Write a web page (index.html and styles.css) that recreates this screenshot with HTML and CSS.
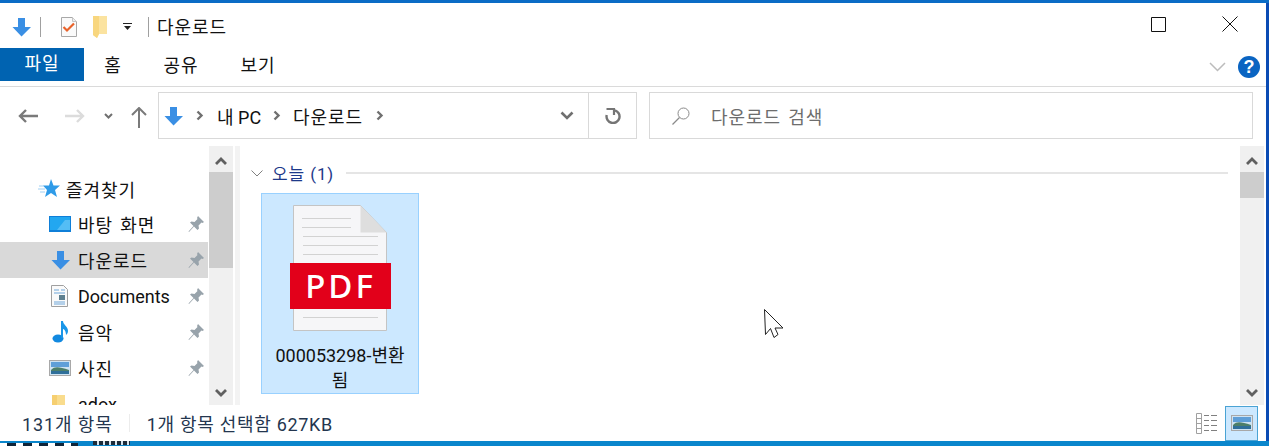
FILE: index.html

```html
<!DOCTYPE html>
<html lang="ko">
<head>
  <meta charset="UTF-8">
  <title>다운로드</title>
  <link rel="stylesheet" href="styles.css">
</head>
<body>
  <div class="window">
    <div class="titlebar">
      <svg class="qa-down" width="20" height="20" viewBox="0 0 20 20"><path d="M6 1h7v9h6l-9.500 9.500L0.500 10h5.500z" fill="#3a8fe4"/></svg>
      <span class="qa-sep"></span>
      <svg class="qa-props" width="18" height="22" viewBox="0 0 18 22"><path d="M1.500 1.500h11l4 4v15h-15z" fill="#fafafa" stroke="#a8a8a8"/><path d="M12.500 1.500v4h4" fill="#eee" stroke="#c4c4c4"/><path d="M3.500 11l3.500 3.500 7-7" fill="none" stroke="#e8622a" stroke-width="2.200"/></svg>
      <svg class="qa-folder" width="15" height="22" viewBox="0 0 15 22"><path d="M0 0h14v18H6l-2 4-4-3z" fill="#fbe3a0"/><path d="M0 0h6v18l-2 4-4-3z" fill="#f8d67e"/></svg>
      <svg class="qa-more" width="9" height="7" viewBox="0 0 9 7"><path d="M0 0h9v1H0zM1 3h7L4.500 7z" fill="#222"/></svg>
      <span class="qa-sep second"></span>
      <span class="title">다운로드</span>
      <div class="win-btns">
        <svg width="15" height="15" viewBox="0 0 15 15"><path d="M.5.500h14v14H.500z" fill="none" stroke="#111"/></svg>
        <svg width="16" height="16" viewBox="0 0 16 16"><path d="M.5.500l15 15M15.500.500l-15 15" fill="none" stroke="#111"/></svg>
      </div>
    </div>

    <div class="ribbon">
      <span class="tab-file">파일</span>
      <span class="tab tab-home">홈</span>
      <span class="tab tab-share">공유</span>
      <span class="tab tab-view">보기</span>
      <div class="ribbon-right">
        <svg width="17" height="10" viewBox="0 0 17 10"><path d="M1 1l7.500 7.500L16 1" fill="none" stroke="#bcbcbc" stroke-width="1.500"/></svg>
        <span class="help">?</span>
      </div>
    </div>

    <div class="navbar">
      <svg class="nav-back" width="20" height="14" viewBox="0 0 20 14"><path d="M8 1L2 7l6 6M2 7h18" fill="none" stroke="#7a7a7a" stroke-width="2.400"/></svg>
      <svg class="nav-fwd" width="20" height="14" viewBox="0 0 20 14"><path d="M12 1l6 6-6 6M18 7H0" fill="none" stroke="#dcdcdc" stroke-width="2.400"/></svg>
      <svg class="nav-recent" width="9" height="6" viewBox="0 0 9 6"><path d="M1 1l3.500 3.500L8 1" fill="none" stroke="#707070" stroke-width="2"/></svg>
      <svg class="nav-up" width="16" height="21" viewBox="0 0 16 21"><path d="M1 8l7-7 7 7M8 1v20" fill="none" stroke="#7a7a7a" stroke-width="2"/></svg>
      <div class="address">
        <svg class="addr-icon" width="20" height="20" viewBox="0 0 20 20"><path d="M6 1h7v9h6l-9.500 9.500L0.500 10h5.500z" fill="#3a8fe4"/></svg>
        <svg class="crumb-arrow first" width="8" height="11" viewBox="0 0 8 11"><path d="M1.500 1.500l4 4-4 4" fill="none" stroke="#707070" stroke-width="2.400"/></svg>
        <span class="crumb pc">내 PC</span>
        <svg class="crumb-arrow" width="8" height="11" viewBox="0 0 8 11"><path d="M1.500 1.500l4 4-4 4" fill="none" stroke="#707070" stroke-width="2.400"/></svg>
        <span class="crumb">다운로드</span>
        <svg class="crumb-arrow" width="8" height="11" viewBox="0 0 8 11"><path d="M1.500 1.500l4 4-4 4" fill="none" stroke="#707070" stroke-width="2.400"/></svg>
        <span class="addr-drop">
          <svg width="14" height="9" viewBox="0 0 14 9"><path d="M1.500 1.500L7 7l5.500-5.500" fill="none" stroke="#707070" stroke-width="2.600"/></svg>
        </span>
        <span class="addr-refresh">
          <svg width="16" height="17" viewBox="0 0 16 17"><path d="M1.500 2h7.500v6" fill="none" stroke="#757575" stroke-width="2.200"/><path d="M10 3.300A6.500 6.500 0 1 1 1.700 8" fill="none" stroke="#757575" stroke-width="2.400"/></svg>
        </span>
      </div>
      <div class="search">
        <svg width="18" height="18" viewBox="0 0 18 18"><circle cx="11.500" cy="6.500" r="5.500" fill="none" stroke="#8a8a8a"/><path d="M7.500 10.500L.5 17.500" stroke="#8a8a8a" stroke-width="1.200"/></svg>
        <span>다운로드 검색</span>
      </div>
    </div>

    <div class="main">
      <div class="sidebar">
        <ul class="tree">
          <li class="fav">
            <svg width="22" height="20" viewBox="0 0 22 20"><path d="M13 0l2.500 6.500H22l-5 4.500 2 7-6-4-6 4 2-7-4-4.500h6z" fill="#2f9be8"/><path d="M1 7h5M0 10h7M2 13h5" stroke="#9fd0f4"/></svg>
            <span>즐겨찾기</span>
          </li>
          <li>
            <svg class="ico" width="22" height="16" viewBox="0 0 22 16"><rect width="22" height="16" fill="#0f7fd8"/><rect x="1" y="1" width="20" height="13" fill="#22a7f0"/><path d="M8 14L16 4h5v10z" fill="#54bdf5"/></svg>
            <span class="label">바탕 화면</span>
            <svg class="pin" width="16" height="16" viewBox="0 0 16 16"><path d="M10 0l6 6-1.500 1-1-.5-3 3 .5 3-1.500 1.500-3.500-3.500-5 5.500-.5-.5 5-5.500-3.500-3.500L3.500 5.500l3 .5 3-3-.5-1z" fill="#98a3ab"/></svg>
          </li>
          <li class="active">
            <svg class="ico slim" width="20" height="20" viewBox="0 0 20 20"><path d="M6 1h7v9h6l-9.500 9.500L0.500 10h5.500z" fill="#3a8fe4"/></svg>
            <span class="label">다운로드</span>
            <svg class="pin" width="16" height="16" viewBox="0 0 16 16"><path d="M10 0l6 6-1.500 1-1-.5-3 3 .5 3-1.500 1.500-3.500-3.500-5 5.500-.5-.5 5-5.500-3.500-3.500L3.500 5.500l3 .5 3-3-.5-1z" fill="#98a3ab"/></svg>
          </li>
          <li>
            <svg class="ico slim" width="17" height="22" viewBox="0 0 17 22"><path d="M.5.500h12l4 4v17H.500z" fill="#fafafa" stroke="#a0a0a0"/><path d="M3 5h5M10 5h4M3 8h11M3 17h11M3 19h11" stroke="#6fa6d8"/><rect x="8" y="10" width="6" height="5" fill="#5d7f8f"/></svg>
            <span class="label latin">Documents</span>
            <svg class="pin" width="16" height="16" viewBox="0 0 16 16"><path d="M10 0l6 6-1.500 1-1-.5-3 3 .5 3-1.500 1.500-3.500-3.500-5 5.500-.5-.5 5-5.500-3.500-3.500L3.500 5.500l3 .5 3-3-.5-1z" fill="#98a3ab"/></svg>
          </li>
          <li>
            <svg class="ico note" width="17" height="22" viewBox="0 0 17 22"><ellipse cx="6" cy="17.500" rx="5.500" ry="4" fill="#1289e0"/><path d="M9 17V0h2c0 4 5 5 5 10 0 2-1 3-2 4 0-4-2-6-3-6v9z" fill="#1a96e8"/></svg>
            <span class="label">음악</span>
            <svg class="pin" width="16" height="16" viewBox="0 0 16 16"><path d="M10 0l6 6-1.500 1-1-.5-3 3 .5 3-1.500 1.500-3.500-3.500-5 5.500-.5-.5 5-5.500-3.500-3.500L3.500 5.500l3 .5 3-3-.5-1z" fill="#98a3ab"/></svg>
          </li>
          <li>
            <svg class="ico" width="22" height="16" viewBox="0 0 22 16"><rect x=".5" y=".5" width="21" height="15" fill="#cfe3f2" stroke="#a8a8a8"/><rect x="2" y="2" width="18" height="5" fill="#5f9fd8"/><path d="M2 10c4-4 8-3 18 0v3H2z" fill="#4d7f6a"/><rect x="2" y="11" width="18" height="3" fill="#2f6f9a"/></svg>
            <span class="label">사진</span>
            <svg class="pin" width="16" height="16" viewBox="0 0 16 16"><path d="M10 0l6 6-1.500 1-1-.5-3 3 .5 3-1.500 1.500-3.500-3.500-5 5.500-.5-.5 5-5.500-3.500-3.500L3.500 5.500l3 .5 3-3-.5-1z" fill="#98a3ab"/></svg>
          </li>
          <li>
            <svg class="ico note" width="13" height="18" viewBox="0 0 13 18"><path d="M0 0h13v18H0z" fill="#f9dc8d"/><path d="M0 0h5v18H0z" fill="#f6cf70"/></svg>
            <span class="label latin">adox</span>
          </li>
        </ul>
        <div class="scrollbar side-scroll">
          <svg class="sc-up" width="12" height="8" viewBox="0 0 12 8"><path d="M1 7l5-5 5 5" fill="none" stroke="#606060" stroke-width="2.800"/></svg>
          <span class="thumb"></span>
          <svg class="sc-down" width="12" height="8" viewBox="0 0 12 8"><path d="M1 1l5 5 5-5" fill="none" stroke="#606060" stroke-width="2.800"/></svg>
        </div>
      </div>

      <div class="content">
        <div class="group-head">
          <svg width="12" height="7" viewBox="0 0 12 7"><path d="M.5.500L6 6l5.500-5.500" fill="none" stroke="#808080"/></svg>
          <span class="group-name">오늘 (1)</span>
          <span class="group-line"></span>
        </div>
        <div class="file">
          <div class="pdf">
            <svg width="102" height="126" viewBox="0 0 102 126">
              <path d="M4.500.500h67l26 27v98h-93z" fill="#f6f6f8" stroke="#c4c4c4"/>
              <path d="M71.500.500l26 27h-26z" fill="#dedede"/>
              <path d="M13 13.500h49M13 22.500h49M14 31.500h75M14 40.500h75M14 49.500h75M14 112.500h75" stroke="#d2d2d2"/>
            </svg>
            <span class="pdf-band">PDF</span>
          </div>
          <span class="file-name">000053298-변환됨</span>
        </div>
        <svg class="cursor" width="21" height="31" viewBox="0 0 21 31"><path d="M1.500 1.500l1 25 5-6 3.500 9 4-3-3-6.500h8z" fill="#fff" stroke="#222"/></svg>
      </div>

      <div class="scrollbar main-scroll">
        <svg class="sc-up" width="12" height="8" viewBox="0 0 12 8"><path d="M1 7l5-5 5 5" fill="none" stroke="#606060" stroke-width="2.800"/></svg>
        <span class="thumb"></span>
        <svg class="sc-down" width="12" height="8" viewBox="0 0 12 8"><path d="M1 1l5 5 5-5" fill="none" stroke="#606060" stroke-width="2.800"/></svg>
      </div>
    </div>

    <div class="statusbar">
      <span>131개 항목</span>
      <span class="status-sep"></span>
      <span>1개 항목 선택함 627KB</span>
      <div class="views">
        <svg width="22" height="22" viewBox="0 0 22 22"><path d="M.5 1.500h5v20h-5zM.5 6.500h5M.5 11.500h5M.5 16.500h5" fill="#fff" stroke="#a0a0a0"/><path d="M8 3.500h5M15 3.500h6M8 8.500h5M15 8.500h6M8 13.500h5M15 13.500h6M8 18.500h5M15 18.500h6" stroke="#808080"/></svg>
        <span class="view-on">
          <svg width="22" height="16" viewBox="0 0 22 16"><rect x=".5" y=".5" width="21" height="15" fill="#cfe3f2" stroke="#a8a8a8"/><rect x="2" y="2" width="18" height="5" fill="#5f9fd8"/><path d="M2 10c4-4 8-3 18 0v3H2z" fill="#4d7f6a"/><rect x="2" y="11" width="18" height="3" fill="#2f6f9a"/></svg>
        </span>
      </div>
    </div>
  </div>
  <div class="taskbar">
    <span class="task-a"></span>
    <span class="task-b"></span>
  </div>
</body>
</html>
```

FILE: styles.css

```css
* {
  box-sizing: border-box;
}
html, body {
  margin: 0;
  height: 446px;
  overflow: hidden;
}
body {
  font-family: Roboto, "Noto Sans CJK KR", sans-serif;
  font-size: 18px;
  letter-spacing: 0.9px;
  color: #111;
  background: linear-gradient(to bottom, #0a6cc6 3px, #0a4bb4 3px);
}
svg {
  display: block;
  flex: none;
}
.window {
  width: 1266px;
  height: 438px;
  margin-top: 3px;
  background: #fff;
  display: flex;
  flex-direction: column;
}
.taskbar {
  height: 5px;
  background: #0a86cc;
  display: flex;
  align-items: flex-end;
}
.task-a {
  width: 78px;
  height: 3px;
  background: repeating-linear-gradient(to right, #fff 0 7px, #10263a 7px 16px);
}
.task-b {
  width: 37px;
  height: 4px;
  margin-left: 15px;
  margin-bottom: 1px;
  background: repeating-linear-gradient(to right, #1b2b3a 0 4px, #d8e4ee 4px 6px);
}

/* title bar */
.titlebar {
  height: 45px;
  display: flex;
  align-items: center;
  padding-left: 12px;
  padding-top: 2px;
}
.qa-sep {
  width: 1px;
  height: 20px;
  background: #a0a0a0;
  margin-left: 8px;
  margin-right: 19px;
}
.qa-sep.second {
  margin: 0 8px 0 16px;
}
.qa-folder {
  margin-left: 15px;
}
.qa-more {
  margin-left: 15px;
}
.title {
  margin-top: -2px;
}
.win-btns {
  margin-left: auto;
  display: flex;
  align-items: center;
  gap: 56px;
  padding-right: 28px;
  margin-bottom: 5px;
}

/* ribbon */
.ribbon {
  height: 39px;
  display: flex;
  align-items: flex-start;
  border-bottom: 1px solid #dadada;
}
.tab-file {
  width: 84px;
  height: 33px;
  line-height: 32px;
  text-align: center;
  background: #0063b1;
  color: #fff;
}
.tab {
  height: 33px;
  line-height: 36px;
  text-align: center;
}
.tab-home {
  width: 58px;
}
.tab-share {
  width: 78px;
}
.tab-view {
  width: 76px;
}
.ribbon-right {
  margin-left: auto;
  display: flex;
  align-items: center;
  gap: 12px;
  padding-right: 6px;
  height: 22px;
  margin-top: 8px;
}
.help {
  width: 22px;
  height: 22px;
  border-radius: 50%;
  background: #0a64c2;
  color: #fff;
  font-family: "Liberation Sans", sans-serif;
  font-weight: bold;
  font-size: 18px;
  letter-spacing: 0;
  line-height: 22px;
  text-align: center;
}

/* address row */
.navbar {
  height: 59px;
  display: flex;
  align-items: flex-start;
  padding: 5px 13px 0 0;
}
.nav-back {
  margin: 17px 0 0 18px;
}
.nav-fwd {
  margin: 17px 0 0 27px;
}
.nav-recent {
  margin: 21px 0 0 19px;
}
.nav-up {
  margin: 15px 0 0 18px;
}
.address {
  width: 479px;
  height: 47px;
  margin-left: 11px;
  border: 1px solid #d9d9d9;
  display: flex;
  align-items: center;
  padding-left: 5px;
}
.crumb-arrow {
  margin-left: 13px;
}
.crumb-arrow.first {
  margin-left: 12px;
}
.crumb {
  margin-left: 13px;
}
.crumb.pc {
  letter-spacing: 0;
}
.crumb.pc + .crumb-arrow,
.crumb.pc + .crumb-arrow + .crumb {
  margin-left: 12px;
}
.addr-drop {
  margin-left: auto;
  width: 44px;
  height: 100%;
  display: flex;
  align-items: center;
  justify-content: center;
  border-right: 1px solid #d9d9d9;
}
.addr-refresh {
  width: 47px;
  display: flex;
  justify-content: center;
}
.search {
  flex: 1;
  height: 47px;
  margin-left: 12px;
  border: 1px solid #d9d9d9;
  display: flex;
  align-items: center;
  padding-left: 22px;
  gap: 21px;
  color: #6d6d6d;
  word-spacing: 2px;
}

/* main area */
.main {
  flex: 1;
  display: flex;
  min-height: 0;
}
.sidebar {
  width: 240px;
  display: flex;
  border-right: 5px solid #f3f3f3;
}
.tree {
  flex: 1;
  list-style: none;
  margin: 0;
  padding: 25px 1px 0 0;
  overflow: hidden;
}
.tree li {
  height: 36px;
  display: flex;
  align-items: center;
  position: relative;
}
.tree .fav {
  height: 35px;
  padding-left: 38px;
  gap: 6px;
}
.tree li.active {
  background: #d9d9d9;
}
.ico {
  margin-left: 49px;
}
.ico.slim {
  margin-left: 51px;
}
.ico.note {
  margin-left: 52px;
}
.label {
  position: absolute;
  left: 78px;
  word-spacing: 2px;
}
.label.latin {
  letter-spacing: 0;
}
.pin {
  margin-left: auto;
  margin-right: 4px;
}
.scrollbar {
  width: 24px;
  background: #f0f0f0;
  display: flex;
  flex-direction: column;
  align-items: center;
  position: relative;
}
.side-scroll {
  margin-right: 2px;
}
.sc-up {
  margin-top: 11px;
}
.sc-down {
  position: absolute;
  bottom: 8px;
}
.thumb {
  position: absolute;
  left: 0;
  right: 0;
  background: #cdcdcd;
}
.side-scroll .thumb {
  top: 26px;
  height: 96px;
}
.main-scroll {
  margin-right: 2px;
}
.main-scroll .thumb {
  top: 26px;
  height: 26px;
}
.content {
  flex: 1;
  position: relative;
  padding: 0 0 0 11px;
  overflow: hidden;
}
.group-head {
  height: 40px;
  display: flex;
  align-items: center;
  gap: 9px;
  padding-right: 12px;
  padding-top: 14px;
}
.group-name {
  color: #1e3a8a;
  font-size: 17px;
  margin-top: -2px;
}
.group-line {
  flex: 1;
  height: 2px;
  background: #e5e5e5;
  margin-left: 3px;
}
.file {
  width: 158px;
  height: 201px;
  margin-left: 10px;
  margin-top: 7px;
  background: #cce8ff;
  border: 1px solid #99d1ff;
  display: flex;
  flex-direction: column;
  align-items: center;
  padding-top: 11px;
}
.pdf {
  position: relative;
  width: 102px;
  height: 126px;
  align-self: flex-start;
  margin-left: 27px;
}
.pdf-band {
  position: absolute;
  left: 1px;
  top: 58px;
  width: 101px;
  height: 46px;
  background: #e2001a;
  color: #fff;
  font-family: "Noto Sans", sans-serif;
  font-weight: 500;
  font-size: 33px;
  line-height: 46px;
  letter-spacing: 3px;
  text-align: center;
}
.file-name {
  margin-top: 12px;
  width: 156px;
  padding: 0 8px;
  text-align: center;
  line-height: 25px;
  letter-spacing: 0;
  word-break: break-all;
}
.cursor {
  position: absolute;
  left: 523px;
  top: 162px;
}

/* status bar */
.statusbar {
  height: 36px;
  display: flex;
  align-items: center;
  padding-left: 22px;
  color: #24364f;
}
.status-sep {
  width: 1px;
  height: 18px;
  background: #ececec;
  margin: 0 17px 0 16px;
}
.status-sep + span {
  letter-spacing: 0.7px;
}
.views {
  margin-left: auto;
  display: flex;
  align-items: center;
  gap: 7px;
  padding-right: 8px;
}
.view-on {
  width: 33px;
  height: 35px;
  background: #cce8ff;
  border: 1px solid #4aa3d4;
  display: flex;
  align-items: center;
  justify-content: center;
}
```
